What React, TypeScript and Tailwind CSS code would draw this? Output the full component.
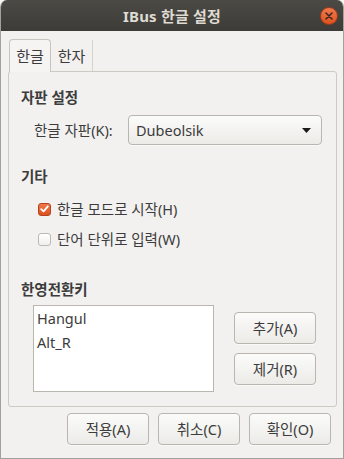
export default function App() {
  const btn =
    "flex items-center justify-center rounded-[4px] border border-[#b9b6af] bg-gradient-to-b from-[#fbfbfa] to-[#ecebe8] shadow-[0_1px_0_rgba(255,255,255,0.6)]";
  return (
    <div className="w-[344px] h-[459px] bg-[#f7f7f7]">
      <div className="w-[344px] h-[459px] flex flex-col bg-[#f2f1f0] rounded-t-[7px] overflow-hidden border-x border-b border-[#a3a19b] text-[14.5px] leading-[20px] text-[#3c3c3c] font-['Noto_Sans','Noto_Sans_CJK_KR',sans-serif]">
        {/* title bar */}
        <div className="relative h-[31px] shrink-0 flex items-center justify-center bg-gradient-to-b from-[#4b4a45] to-[#3c3b37]">
          <span className="text-[15px] font-bold text-[#dfdbd2] tracking-[0.2px]">IBus 한글 설정</span>
          <div className="absolute right-[5px] top-[7px] w-[18px] h-[18px] rounded-full bg-gradient-to-b from-[#f27a4c] to-[#e0501c] border border-[#9e3d19] flex items-center justify-center">
            <svg width="8" height="8" viewBox="0 0 8 8">
              <path d="M1 1 L7 7 M7 1 L1 7" stroke="#3c2a22" strokeWidth="1.6" strokeLinecap="round" />
            </svg>
          </div>
        </div>

        {/* tabs */}
        <div className="flex items-end pl-[8px] pt-[7px] h-[40px] shrink-0">
          <div className="relative z-10 -mb-px w-[42px] h-[33px] flex items-center justify-center rounded-t-[4px] border border-b-0 border-[#c8c5be] bg-[#f5f4f3] text-[15px]">
            한글
          </div>
          <div className="w-[42px] h-[31px] flex items-center justify-center border-r border-[#d6d3cd] text-[15px]">
            한자
          </div>
        </div>

        {/* notebook frame */}
        <div className="ml-[7px] w-[329px] h-[336px] shrink-0 rounded-[3px] border border-[#cdcac3] bg-[#f2f1f0] flex flex-col pl-[12px] pt-[15px]">
          <div className="font-bold">자판 설정</div>
          <div className="mt-[8px] flex items-center">
            <span className="ml-[13px] w-[94px]">한글 자판(K):</span>
            <div className={btn + " w-[194px] h-[30px] !justify-between pl-[7px] pr-[10px]"}>
              <span>Dubeolsik</span>
              <svg width="9" height="5" viewBox="0 0 9 5">
                <path d="M0 0 H9 L4.5 5 Z" fill="#1a1a1a" />
              </svg>
            </div>
          </div>

          <div className="mt-[21px] font-bold">기타</div>
          <div className="mt-[13px] flex items-center pl-[17px]">
            <div className="w-[13px] h-[13px] rounded-[3px] bg-gradient-to-b from-[#f0784a] to-[#dc4f1c] border border-[#b2451d] flex items-center justify-center">
              <svg width="9" height="8" viewBox="0 0 9 8">
                <path d="M1.2 4.2 L3.6 6.4 L7.8 1.4" stroke="#fff" strokeWidth="1.8" fill="none" strokeLinecap="round" strokeLinejoin="round" />
              </svg>
            </div>
            <span className="ml-[6px]">한글 모드로 시작(H)</span>
          </div>
          <div className="mt-[10px] flex items-center pl-[17px]">
            <div className="w-[13px] h-[13px] rounded-[3px] bg-gradient-to-b from-[#ffffff] to-[#f0efed] border border-[#bcb9b2]" />
            <span className="ml-[6px]">단어 단위로 입력(W)</span>
          </div>

          <div className="mt-[30px] font-bold">한영전환키</div>
          <div className="mt-[6px] flex items-start pl-[12px]">
            <div className="w-[181px] h-[87px] bg-white border border-[#b9b6af] pl-[3px]">
              <div className="h-[24px] leading-[24px]">Hangul</div>
              <div className="h-[24px] leading-[24px]">Alt_R</div>
            </div>
            <div className="ml-[20px] mt-[7px] flex flex-col gap-[9px]">
              <div className={btn + " w-[82px] h-[32px]"}>추가(A)</div>
              <div className={btn + " w-[82px] h-[32px]"}>제거(R)</div>
            </div>
          </div>
        </div>

        {/* bottom buttons */}
        <div className="mt-[6px] flex justify-end gap-[9px] pr-[12px]">
          <div className={btn + " w-[82px] h-[32px]"}>적용(A)</div>
          <div className={btn + " w-[82px] h-[32px]"}>취소(C)</div>
          <div className={btn + " w-[82px] h-[32px]"}>확인(O)</div>
        </div>
      </div>
    </div>
  );
}
